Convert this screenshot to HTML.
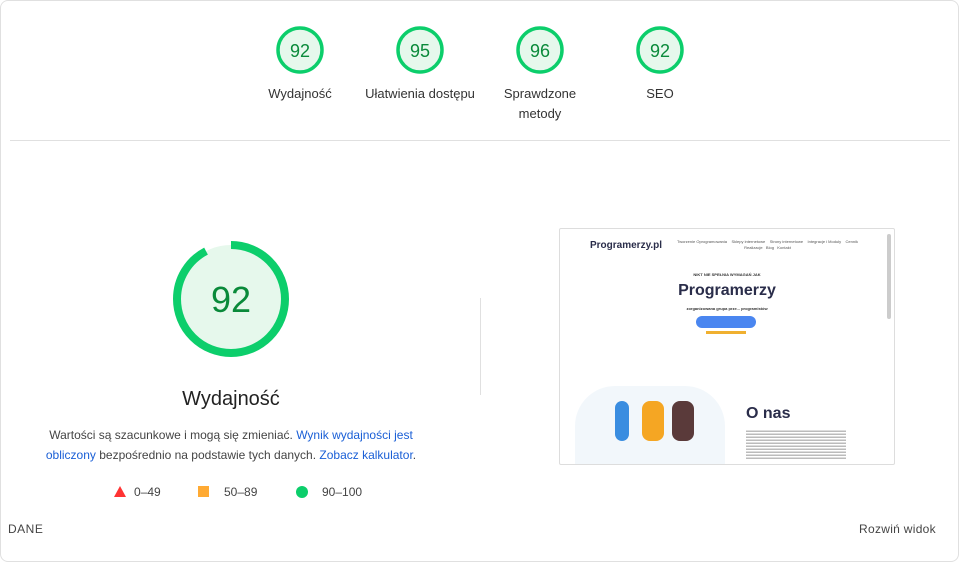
<!DOCTYPE html>
<html><head><meta charset="utf-8"><style>
body{margin:0;width:959px;height:545px;background:#fff;font-family:"Liberation Sans",Arial,sans-serif;position:relative;overflow:hidden;color:#202124}
.frame{position:absolute;left:0;top:0;width:957px;height:560px;border:1px solid #e0e0e0;border-radius:8px}
.g{position:absolute;text-align:center;font-size:13px;line-height:20px;color:#333}
.s{position:absolute}
.abs{position:absolute}
</style></head><body>
<div class="frame"></div>
<svg class="s" style="left:0;top:0" width="959" height="545">
 <g fill="#e6f8ec" stroke="#0cce6b" stroke-width="3.5">
  <circle cx="300" cy="50" r="22"/><circle cx="420" cy="50" r="22"/><circle cx="540" cy="50" r="22"/><circle cx="660" cy="50" r="22"/>
 </g>
 <g font-family="Liberation Sans,Arial,sans-serif" font-size="18" fill="#0a8a3a" text-anchor="middle">
  <text x="300" y="57">92</text><text x="420" y="57">95</text><text x="540" y="57">96</text><text x="660" y="57">92</text>
 </g>
 <line x1="10" y1="140.5" x2="950" y2="140.5" stroke="#e0e0e0"/>
 <circle cx="231" cy="299" r="54" fill="#e6f8ec" stroke="#0cce6b" stroke-width="8" stroke-dasharray="313 340" transform="rotate(-90 231 299)"/>
 <text x="231" y="312" font-family="Liberation Sans,Arial,sans-serif" font-size="36" fill="#0a8a3a" text-anchor="middle">92</text>
 <line x1="480.5" y1="298" x2="480.5" y2="395" stroke="#e0e0e0"/>
 <polygon points="114,497 120,486 126,497" fill="#ff3333"/>
 <rect x="198" y="486" width="11" height="11" fill="#ffaa33"/>
 <circle cx="302" cy="492" r="6" fill="#0cce6b"/>
</svg>
<div class="g" style="left:250px;top:84px;width:100px">Wydajność</div>
<div class="g" style="left:360px;top:84px;width:120px">Ułatwienia dostępu</div>
<div class="g" style="left:490px;top:84px;width:100px">Sprawdzone</div>
<div class="g" style="left:490px;top:104px;width:100px">metody</div>
<div class="g" style="left:610px;top:84px;width:100px">SEO</div>
<div class="abs" style="left:131px;top:388px;width:200px;text-align:center;font-size:20px;color:#222">Wydajność</div>
<div class="abs" style="left:40px;top:425px;width:382px;text-align:center;font-size:12px;line-height:20px;color:#444">Wartości są szacunkowe i mogą się zmieniać. <span style="color:#1a5fd6">Wynik wydajności jest obliczony</span> bezpośrednio na podstawie tych danych. <span style="color:#1a5fd6">Zobacz kalkulator</span>.</div>
<div class="abs" style="left:134px;top:485px;font-size:12px;color:#444">0–49</div>
<div class="abs" style="left:224px;top:485px;font-size:12px;color:#444">50–89</div>
<div class="abs" style="left:322px;top:485px;font-size:12px;color:#444">90–100</div>
<div class="abs" style="left:8px;top:522px;font-size:12px;color:#444;letter-spacing:.5px">DANE</div>
<div class="abs" style="left:859px;top:522px;font-size:12px;color:#444;letter-spacing:.3px">Rozwiń widok</div>
<div class="abs" style="left:559px;top:228px;width:334px;height:235px;border:1px solid #ddd;border-radius:2px;overflow:hidden;background:#fff">
 <div class="abs" style="left:30px;top:11px;font-size:10px;font-weight:bold;color:#2a2d4a">Programerzy.pl</div>
 <div class="abs" style="left:100px;top:10px;width:215px;font-size:4px;color:#555;text-align:center;line-height:6px">Tworzenie Oprogramowania &nbsp;&nbsp; Sklepy internetowe &nbsp;&nbsp; Strony internetowe &nbsp;&nbsp; Integracje i Moduły &nbsp;&nbsp; Cennik<br>Realizacje &nbsp; Blog &nbsp; Kontakt</div>
 <div class="abs" style="left:0;top:43px;width:334px;text-align:center;font-size:4px;color:#333;font-weight:bold">NIKT NIE SPEŁNIA WYMAGAŃ JAK</div>
 <div class="abs" style="left:0;top:53px;width:334px;text-align:center;font-size:16px;font-weight:bold;color:#2a2d4a">Programerzy</div>
 <div class="abs" style="left:0;top:77px;width:334px;text-align:center;font-size:4px;color:#333;font-weight:bold">zorganizowana grupa prze... programistów</div>
 <div class="abs" style="left:136px;top:87px;width:60px;height:12px;border-radius:6px;background:#4a86f0"></div>
 <div class="abs" style="left:146px;top:102px;width:40px;height:3px;background:#f0b030"></div>
 <div class="abs" style="left:15px;top:157px;width:150px;height:80px;background:#f2f7fb;border-radius:40px 40px 0 0"></div>
 <div class="abs" style="left:55px;top:172px;width:14px;height:40px;border-radius:7px;background:#3a8de0"></div>
 <div class="abs" style="left:82px;top:172px;width:22px;height:40px;border-radius:8px;background:#f5a623"></div>
 <div class="abs" style="left:112px;top:172px;width:22px;height:40px;border-radius:8px;background:#5a3a3a"></div>
 <div class="abs" style="left:186px;top:176px;font-size:16px;font-weight:bold;color:#2a2d4a">O nas</div>
 <div class="abs" style="left:186px;top:200px;width:100px;height:30px;background:repeating-linear-gradient(#fff 0,#fff 1.5px,#bbb 1.5px,#bbb 3px)"></div>
 <div class="abs" style="left:327px;top:5px;width:4px;height:85px;background:#ccc;border-radius:2px"></div>
</div>
</body></html>
